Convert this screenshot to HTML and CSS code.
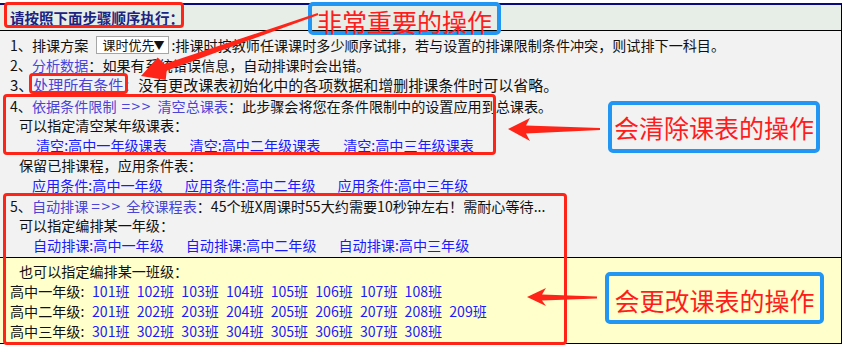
FILE: index.html
```html
<!DOCTYPE html>
<html lang="zh-CN">
<head>
  <meta charset="UTF-8" />
  <title>排课步骤</title>
  <link rel="stylesheet" href="styles.css">
</head>
<body>
  <div class="sheet">
    <div class="panel">
      <div class="panel-head">请按照下面步骤顺序执行：</div>

      <div class="panel-body">
        <div class="line">1、排课方案 <span class="select">课时优先<i>▼</i></span>:排课时按教师任课课时多少顺序试排，若与设置的排课限制条件冲突，则试排下一科目。</div>
        <div class="line">2、<a class="step">分析数据</a>：如果有系统错误信息，自动排课时会出错。</div>
        <div class="line wide">3、<a class="step">处理所有条件</a>：没有更改课表初始化中的各项数据和增删排课条件时可以省略。</div>
        <div class="line">4、<a class="step">依据条件限制<span class="sym sym-4">=&gt;&gt;</span>清空总课表</a>：此步骤会将您在条件限制中的设置应用到总课表。</div>
        <div class="line sub">可以指定清空某年级课表：</div>
        <div class="line links links-clear">
          <a>清空:高中一年级课表</a>
          <a>清空:高中二年级课表</a>
          <a>清空:高中三年级课表</a>
        </div>
        <div class="line sub">保留已排课程，应用条件表：</div>
        <div class="line links links-apply">
          <a>应用条件:高中一年级</a>
          <a>应用条件:高中二年级</a>
          <a>应用条件:高中三年级</a>
        </div>
        <div class="line">5、<a class="step">自动排课<span class="sym sym-5">=&gt;&gt;</span>全校课程表</a>：45个班X周课时55大约需要10秒钟左右！需耐心等待...</div>
        <div class="line sub">可以指定编排某一年级：</div>
        <div class="line links links-auto">
          <a>自动排课:高中一年级</a>
          <a>自动排课:高中二年级</a>
          <a>自动排课:高中三年级</a>
        </div>
      </div>

      <div class="panel-foot">
        <div class="line sub">也可以指定编排某一班级：</div>
        <div class="line classes"><span class="grade">高中一年级:</span><a>101班</a><a>102班</a><a>103班</a><a>104班</a><a>105班</a><a>106班</a><a>107班</a><a>108班</a></div>
        <div class="line classes"><span class="grade">高中二年级:</span><a>201班</a><a>202班</a><a>203班</a><a>204班</a><a>205班</a><a>206班</a><a>207班</a><a>208班</a><a>209班</a></div>
        <div class="line classes"><span class="grade">高中三年级:</span><a>301班</a><a>302班</a><a>303班</a><a>304班</a><a>305班</a><a>306班</a><a>307班</a><a>308班</a></div>
      </div>
    </div>

    <!-- annotations drawn over the page -->
    <div class="mark mark-head"></div>
    <div class="mark mark-step3"></div>
    <div class="mark mark-step4"></div>
    <div class="mark mark-step5"></div>

    <div class="note note-top">非常重要的操作</div>
    <div class="note note-clear">会清除课表的操作</div>
    <div class="note note-change">会更改课表的操作</div>

    <svg class="arrows" width="842" height="361" viewBox="0 0 842 361">
      <polygon points="141,76 165.7,80 166.7,70.7 318.3,14.9 317.7,13.1 164.3,64.1 157.7,57.4" />
      <polygon points="508,129 530,118 526,125.5 600,128 600,130 526,133.5 530,141" />
      <polygon points="527,297 546,288 542,294.5 597,296.5 597,298.5 542,300.5 546,306" />
    </svg>
  </div>
</body>
</html>
```

FILE: styles.css
```css
* {
  box-sizing: border-box;
}

body {
  margin: 0;
  background: #fff;
  font-family: "Noto Sans CJK SC", "Noto Sans", sans-serif;
  font-size: 14.1px;
  color: #111;
}

.sheet {
  position: relative;
  width: 842px;
  height: 361px;
  overflow: hidden;
}

.panel {
  margin-top: 3px;
  border-top: 2px solid #0a0a80;
  border-right: 1px solid #000;
  width: 842px;
}

.panel-head {
  height: 26px;
  line-height: 25px;
  padding-left: 10px;
  background: #e7ede7;
  border-bottom: 1px solid #000;
  font-size: 14.5px;
  font-weight: bold;
  color: #1c2380;
}

.panel-body {
  background: #f2f2f2;
  padding: 4px 0 2px 10px;
}

.panel-foot {
  background: #ffffcc;
  border-top: 1px solid #000;
  border-bottom: 1px solid #000;
  padding: 3px 0 2px 10px;
}

.line {
  height: 20px;
  line-height: 20px;
  white-space: nowrap;
}

.line.wide {
  font-size: 15px;
}

a {
  color: #1a1aff;
  text-decoration: none;
}

a.step {
  color: #4a44d8;
}

.sym {
  display: inline-block;
  padding-left: 5px;
  font-size: 15.5px;
  letter-spacing: 1.5px;
}

.sym-4 {
  width: 41px;
}

.sym-5 {
  width: 38px;
  padding-left: 3px;
}

.sub {
  padding-left: 9px;
}

.links {
  display: flex;
  gap: 22px;
}

.links-clear {
  padding-left: 26px;
  gap: 22.8px;
}

.links-apply {
  padding-left: 22px;
}

.links-auto {
  padding-left: 23px;
}

.grade {
  display: inline-block;
  width: 82px;
}

.classes a {
  margin-right: 7.1px;
}

.select {
  display: inline-block;
  vertical-align: top;
  margin: 1px 2px 0 5px;
  width: 73px;
  height: 18px;
  line-height: 16px;
  padding-left: 5px;
  border: 1px solid #a6a6a6;
  background: #fff;
  font-size: 13px;
  position: relative;
}

.select i {
  font-style: normal;
  font-size: 11px;
  position: absolute;
  right: 4px;
  top: 0;
}

/* annotation layer */
.mark {
  position: absolute;
  border: 3px solid #ff2418;
  border-radius: 4px;
}

.mark-head {
  left: 4px;
  top: 2px;
  width: 180px;
  height: 26px;
}

.mark-step3 {
  left: 29px;
  top: 73px;
  width: 99px;
  height: 21px;
}

.mark-step4 {
  left: 3px;
  top: 94px;
  width: 493px;
  height: 61px;
}

.mark-step5 {
  left: 3px;
  top: 193px;
  width: 564px;
  height: 152px;
}

.note {
  position: absolute;
  border: 4px solid #2196f3;
  border-radius: 5px;
  color: #ff1c1c;
  font-size: 25px;
  display: flex;
  align-items: center;
  justify-content: center;
}

.note-top {
  left: 308px;
  top: 2px;
  width: 193px;
  height: 33px;
  padding-top: 5px;
}

.note-clear {
  left: 608px;
  top: 101px;
  width: 212px;
  height: 52px;
}

.note-change {
  left: 605px;
  top: 272px;
  width: 219px;
  height: 52px;
  padding-top: 4px;
}

.arrows {
  position: absolute;
  left: 0;
  top: 0;
  fill: #ff2418;
}
```
